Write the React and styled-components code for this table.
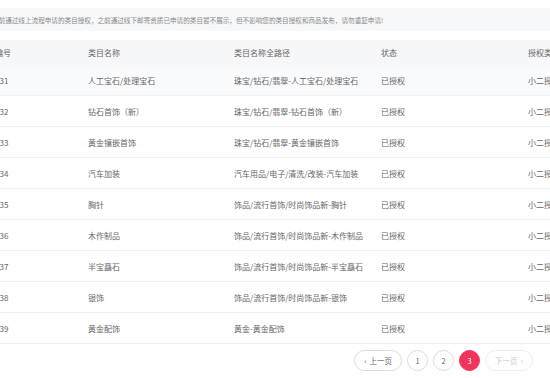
import styled, { createGlobalStyle } from 'styled-components';

const GlobalStyle = createGlobalStyle`
  body {
    margin: 0;
    background: #ffffff;
    font-family: "Noto Sans CJK SC", "Noto Sans", sans-serif;
  }
`;

const Page = styled.div`
  width: 550px;
  height: 378px;
  overflow: hidden;
  padding-top: 8px;
  box-sizing: border-box;
`;

const Inner = styled.div`
  width: 700px;
  margin-left: -5px;
`;

const Notice = styled.div`
  height: 23px;
  display: flex;
  align-items: center;
  background: #f7f8fa;
  color: #888;
  font-size: 6.6px;
  margin-left: -3px;
  white-space: nowrap;
`;

const Table = styled.div`
  margin-top: 9px;
  display: flex;
  flex-direction: column;
`;

const Row = styled.div`
  display: grid;
  grid-template-columns: 93px 146px 147px 147px 167px;
  align-items: center;
  height: ${(p) => (p.$head ? '25px' : '31px')};
  background: ${(p) => (p.$head ? '#f6f7f9' : p.$hover ? '#f9fafc' : '#ffffff')};
  border-bottom: ${(p) => (p.$head ? 'none' : '1px solid #f0f1f3')};
  box-sizing: border-box;
  color: #666;
  font-size: 8px;
  white-space: nowrap;
`;

const Cell = styled.div`
  overflow: hidden;
`;

const Pager = styled.div`
  display: flex;
  justify-content: flex-end;
  align-items: center;
  gap: 5px;
  margin-top: 6px;
  width: 538px;
`;

const PageBtn = styled.div`
  height: 21px;
  min-width: 21px;
  padding: ${(p) => (p.$wide ? '0 9px' : '0')};
  box-sizing: border-box;
  border-radius: 11px;
  display: flex;
  align-items: center;
  justify-content: center;
  gap: 3px;
  font-size: 7.5px;
  border: 1px solid ${(p) => (p.$active ? '#f2345b' : p.$disabled ? '#eeeeee' : '#dcdcdc')};
  background: ${(p) => (p.$active ? '#f2345b' : '#ffffff')};
  color: ${(p) => (p.$active ? '#ffffff' : p.$disabled ? '#cccccc' : '#666')};
`;

const Arrow = styled.span`
  font-size: 8px;
  line-height: 1;
`;

const rows = [
  ['131', '人工宝石/处理宝石', '珠宝/钻石/翡翠-人工宝石/处理宝石'],
  ['132', '钻石首饰（新）', '珠宝/钻石/翡翠-钻石首饰（新）'],
  ['133', '黄金镶嵌首饰', '珠宝/钻石/翡翠-黄金镶嵌首饰'],
  ['134', '汽车加装', '汽车用品/电子/清洗/改装-汽车加装'],
  ['135', '胸针', '饰品/流行首饰/时尚饰品新-胸针'],
  ['136', '木作制品', '饰品/流行首饰/时尚饰品新-木作制品'],
  ['137', '半宝矗石', '饰品/流行首饰/时尚饰品新-半宝矗石'],
  ['138', '银饰', '饰品/流行首饰/时尚饰品新-银饰'],
  ['139', '黄金配饰', '黄金-黄金配饰'],
];

const App = () => (
  <Page>
    <GlobalStyle />
    <Inner>
      <Notice>
        目前通过线上流程申请的类目授权，之前通过线下邮寄资质已申请的类目暂不展示，但不影响您的类目授权和商品发布，请勿重复申请!
      </Notice>
      <Table>
        <Row $head>
          <Cell>编号</Cell>
          <Cell>类目名称</Cell>
          <Cell>类目名称全路径</Cell>
          <Cell>状态</Cell>
          <Cell>授权类型</Cell>
        </Row>
        {rows.map(([id, name, path], i) => (
          <Row key={id} $hover={i === 0}>
            <Cell>{id}</Cell>
            <Cell>{name}</Cell>
            <Cell>{path}</Cell>
            <Cell>已授权</Cell>
            <Cell>小二授权</Cell>
          </Row>
        ))}
      </Table>
      <Pager>
        <PageBtn $wide>
          <Arrow>‹</Arrow>上一页
        </PageBtn>
        <PageBtn>1</PageBtn>
        <PageBtn>2</PageBtn>
        <PageBtn $active>3</PageBtn>
        <PageBtn $wide $disabled>
          下一页<Arrow>›</Arrow>
        </PageBtn>
      </Pager>
    </Inner>
  </Page>
);

export default App;
